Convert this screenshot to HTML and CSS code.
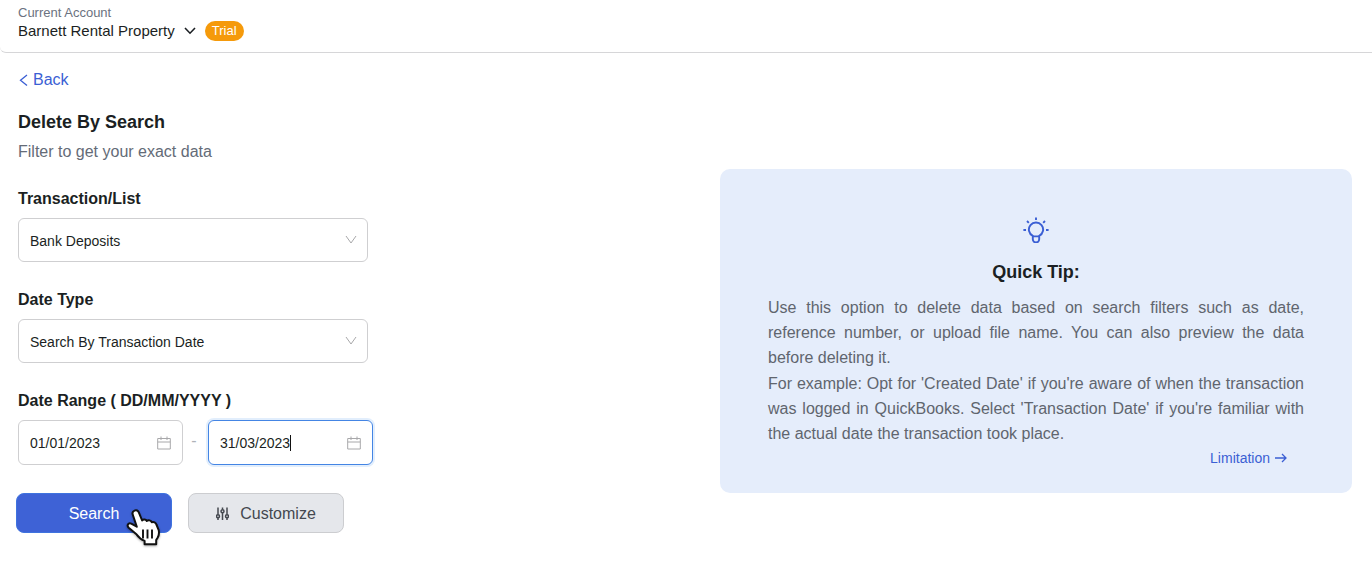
FILE: index.html
```html
<!DOCTYPE html>
<html lang="en">
<head>
<meta charset="utf-8">
<meta name="viewport" content="width=device-width, initial-scale=1">
<title>Delete By Search</title>
<link rel="stylesheet" href="styles.css">
</head>
<body>
<header class="topbar">
  <div class="account">
    <span class="account-label">Current Account</span>
    <div class="account-row">
      <button class="account-switch" type="button">Barnett Rental Property
        <svg width="12" height="8" viewBox="0 0 12 8" fill="none" stroke="currentColor" stroke-width="1.6" aria-hidden="true"><path d="M1 1l5 5.2L11 1"/></svg>
      </button>
      <span class="badge">Trial</span>
    </div>
  </div>
</header>
<main class="page">
  <section class="filters">
    <a class="back" href="#"><svg width="10" height="14" viewBox="0 0 10 14" fill="none" stroke="currentColor" stroke-width="1.3" aria-hidden="true"><path d="M9 2L2.500 7.300l6.500 5.300"/></svg>Back</a>
    <h1 class="title">Delete By Search</h1>
    <p class="subtitle">Filter to get your exact data</p>
    <form class="form">
      <div class="field">
        <label class="label" for="list">Transaction/List</label>
        <div class="control">
          <select class="box" id="list"><option>Bank Deposits</option></select>
          <svg class="chevron" width="12" height="10" viewBox="0 0 12 10" fill="none" stroke="currentColor" aria-hidden="true"><path d="M1 1l5 7 5-7"/></svg>
        </div>
      </div>
      <div class="field">
        <label class="label" for="type">Date Type</label>
        <div class="control">
          <select class="box" id="type"><option>Search By Transaction Date</option></select>
          <svg class="chevron" width="12" height="10" viewBox="0 0 12 10" fill="none" stroke="currentColor" aria-hidden="true"><path d="M1 1l5 7 5-7"/></svg>
        </div>
      </div>
      <div class="field">
        <label class="label" for="from">Date Range ( DD/MM/YYYY )</label>
        <div class="range">
          <div class="control date">
            <input class="box" id="from" type="text" value="01/01/2023">
            <svg class="calendar" width="14" height="14" viewBox="0 0 14 14" fill="none" stroke="currentColor" aria-hidden="true"><path d="M.7 2.500h12.600v10.500H.7zM.7 6h12.600M4 .5v3.500M10 .5v3.500"/></svg>
          </div>
          <span class="dash">-</span>
          <div class="control date">
            <input class="box active" type="text" value="31/03/2023" aria-label="End date">
            <span class="caret"></span>
            <svg class="calendar" width="14" height="14" viewBox="0 0 14 14" fill="none" stroke="currentColor" aria-hidden="true"><path d="M.7 2.500h12.600v10.500H.7zM.7 6h12.600M4 .5v3.500M10 .5v3.500"/></svg>
          </div>
        </div>
      </div>
      <div class="actions">
        <button class="button primary" type="button">Search
          <svg class="pointer" width="36" height="38" viewBox="0 0 36 38" aria-hidden="true"><path d="M8.500 1.600c1.900-.8 3.600 0 4.300 1.700l3.300 8.200c1.200-1.500 3.700-1.300 4.700.5 1.600-1.300 4.100-.7 4.900 1.200 2-.8 4.200.3 4.700 2.300l2.300 5.600c.6 2.600.2 5.400-1.100 7.700l-1.400 2.300v4.200H18.600v-3.400c-3.300-1.200-5.800-3.300-7.900-6.300l-8-6.800c-2.300-2.500-.4-5.300 2.500-4.200l5.600 3.100L6.800 5.700C6.100 3.900 6.900 2.300 8.500 1.600z" fill="#fff" stroke="#111" stroke-width="2" stroke-linejoin="round"/><path d="M17 20.500v9M21.500 20.500v9M26 20.500v9" fill="none" stroke="#111" stroke-width="1.900"/></svg>
        </button>
        <button class="button secondary" type="button"><svg width="13" height="14" viewBox="0 0 13 14" fill="none" stroke="currentColor" stroke-width="1.500" aria-hidden="true"><path d="M2 .5v7M2 11v2M6.500 .5v2M6.500 6v7M11 .5v7M11 11v2"/><circle cx="2" cy="9.300" r="1.500"/><circle cx="6.500" cy="4.300" r="1.500"/><circle cx="11" cy="9.300" r="1.500"/></svg>Customize</button>
      </div>
    </form>
  </section>
  <aside class="tip">
    <svg class="bulb" width="26" height="26" viewBox="0 0 26 26" fill="none" stroke="currentColor" stroke-width="1.900" aria-hidden="true"><path d="M9.800 19.600v-.7a7.100 7.100 0 1 1 6.400 0v.7M9.800 19.400h6.400v2.800a3.200 3.200 0 0 1-6.400 0z"/><path d="M13 .5v2.500M.4 13H3M23 13h2.600M4 4l1.800 1.800M22 4l-1.800 1.800"/></svg>
    <h2 class="tip-title">Quick Tip:</h2>
    <p class="tip-text">Use this option to delete data based on search filters such as date, reference number, or upload file name. You can also preview the data before deleting it.</p>
    <p class="tip-text">For example: Opt for 'Created Date' if you're aware of when the transaction was logged in QuickBooks. Select 'Transaction Date' if you're familiar with the actual date the transaction took place.</p>
    <a class="limitation" href="#">Limitation <svg width="12" height="10" viewBox="0 0 12 10" fill="none" stroke="currentColor" stroke-width="1.300" aria-hidden="true"><path d="M0 5h11M7 1l4 4-4 4"/></svg></a>
  </aside>
</main>
</body>
</html>
```
FILE: styles.css
```css
* { box-sizing: border-box; }
body {
  margin: 0;
  background: #fff;
  color: #1b1f23;
  font: 16px/24px "Liberation Sans", Arial, sans-serif;
}
button, input, select { font: inherit; color: inherit; }
h1, h2, p { margin: 0; }
a { color: #3b5fd4; text-decoration: none; }
.topbar {
  padding: 5px 18px 11px;
  border-bottom: 1px solid #d6d6d8;
  border-bottom-left-radius: 6px;
}
.account-label { display: block; font-size: 13px; line-height: 16px; color: #6b7280; }
.account-row { display: flex; align-items: center; gap: 9px; height: 20px; line-height: 20px; }
.account-switch {
  display: flex;
  align-items: center;
  gap: 9px;
  padding: 0;
  border: 0;
  background: none;
  font-size: 15px;
}
.badge {
  padding: 0 7px;
  border-radius: 10px;
  background: #f59a0b;
  color: #fff;
  font-size: 13px;
  line-height: 20px;
}
.page {
  display: grid;
  grid-template-columns: 1fr 1fr;
  gap: 70px;
  align-items: start;
  padding: 15px 20px 20px 18px;
}
.back { display: flex; align-items: center; gap: 5px; width: max-content; }
.title { margin-top: 18px; font-size: 18px; line-height: 24px; }
.subtitle { margin-top: 6px; color: #646b77; }
.form { display: grid; gap: 25px; margin-top: 23px; }
.label { display: block; margin-bottom: 7px; font-weight: 700; font-size: 16px; }
.field + .field { margin-top: 1px; }
.control { position: relative; width: 350px; max-width: 100%; }
.box {
  display: block;
  width: 100%;
  height: 44px;
  padding: 1px 11px 0;
  border: 1px solid #cfcfd1;
  border-radius: 6px;
  background: #fff;
  font-size: 14px;
  appearance: none;
  outline: 0;
}
.chevron { position: absolute; right: 11px; top: 17px; color: #a8a8aa; pointer-events: none; }
.range { display: flex; align-items: center; }
.date { width: 165px; }
.date .box { height: 45px; }
.active { border-color: #4485e4; box-shadow: 0 0 0 2px #e2eefc; caret-color: transparent; }
.caret { position: absolute; left: 82px; top: 15px; width: 1px; height: 16px; background: #111; }
.calendar { position: absolute; right: 12px; top: 16px; color: #a8a8aa; }
.dash { width: 25px; padding: 0 3px 4px 0; text-align: center; color: #aeb2b8; }
.actions { display: flex; gap: 16px; margin: 3px 0 0 -2px; }
.button {
  position: relative;
  display: flex;
  align-items: center;
  justify-content: center;
  width: 156px;
  height: 40px;
  padding: 1px 0 0;
  border: 1px solid;
  border-radius: 8px;
}
.primary { border-color: #3f73df; background: #3e62d6; color: #fff; }
.secondary { gap: 11px; border-color: #cccdd0; background: #e5e7eb; color: #44484f; }
.pointer { position: absolute; left: 109px; top: 15px; filter: drop-shadow(0 1px 1px #0005); }
.tip {
  display: flex;
  flex-direction: column;
  align-items: center;
  margin-top: 101px;
  padding: 48px 48px 23px;
  border-radius: 10px;
  background: #e5edfb;
}
.bulb { color: #3b5fd4; }
.tip-title { margin: 17px 0 11px; font-size: 18px; line-height: 24px; }
.tip-text { width: 100%; line-height: 25px; text-align: justify; color: #60656e; }
.tip-text + .tip-text { margin-top: 1px; }
.limitation { display: flex; align-items: center; gap: 5px; align-self: flex-end; margin-right: 17px; font-size: 14px; }
```
